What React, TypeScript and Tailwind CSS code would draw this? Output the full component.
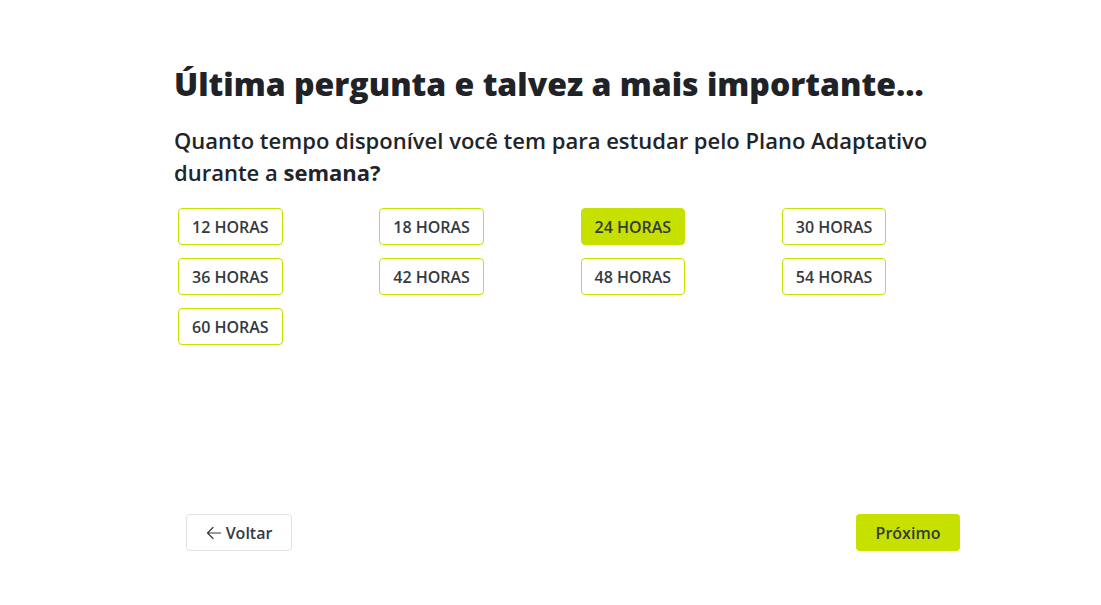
const hours = [12, 18, 24, 30, 36, 42, 48, 54, 60];
const selected = 24;

export default function App() {
    return (
        <div className="min-h-[605px] bg-white font-['Open_Sans',sans-serif] text-[#212529]">
            <div className="w-[753px] mx-auto pt-[62px]">
                <h1 className="text-[32px] leading-[44px] font-extrabold text-[#1f2328]">
                    Última pergunta e talvez a mais importante...
                </h1>
                <p className="mt-[18px] w-[775px] text-[22px] leading-[32px] font-semibold text-[#212529]">
                    Quanto tempo disponível você tem para estudar pelo Plano Adaptativo durante a <span className="font-bold">semana?</span>
                </p>

                {/* Options */}
                <div className="mt-[20px] w-[805px] grid grid-cols-4 gap-y-[13px]">
                    {hours.map((h) => (
                        <div key={h} className="pl-1">
                            <button
                                className={
                                    h === selected
                                        ? 'h-[37px] px-[13px] rounded-[4px] border border-[#c6e000] bg-[#c6e000] text-[16px] font-semibold text-[#343a40]'
                                        : 'h-[37px] px-[13px] rounded-[4px] border border-[#c6e000] bg-white text-[16px] font-semibold text-[#343a40]'
                                }
                            >
                                {h} HORAS
                            </button>
                        </div>
                    ))}
                </div>

                {/* Navigation */}
                <div className="mt-[169px] ml-3 w-[774px] flex items-center justify-between">
                    <button className="h-[37px] w-[106px] flex items-center justify-center gap-1 rounded-[4px] border border-[#dee2e6] bg-white text-[16px] font-semibold text-[#343a40]">
                        <svg className="w-[16px] h-[16px]" viewBox="0 0 16 16" fill="none" stroke="currentColor" strokeWidth="1.2" strokeLinecap="round" strokeLinejoin="round">
                            <path d="M14.5 8H1.5M7 2.5L1.5 8L7 13.5" />
                        </svg>
                        Voltar
                    </button>
                    <button className="h-[37px] w-[104px] rounded-[4px] bg-[#c6e000] text-[16px] font-semibold text-[#343a40]">
                        Próximo
                    </button>
                </div>
            </div>
        </div>
    );
}
